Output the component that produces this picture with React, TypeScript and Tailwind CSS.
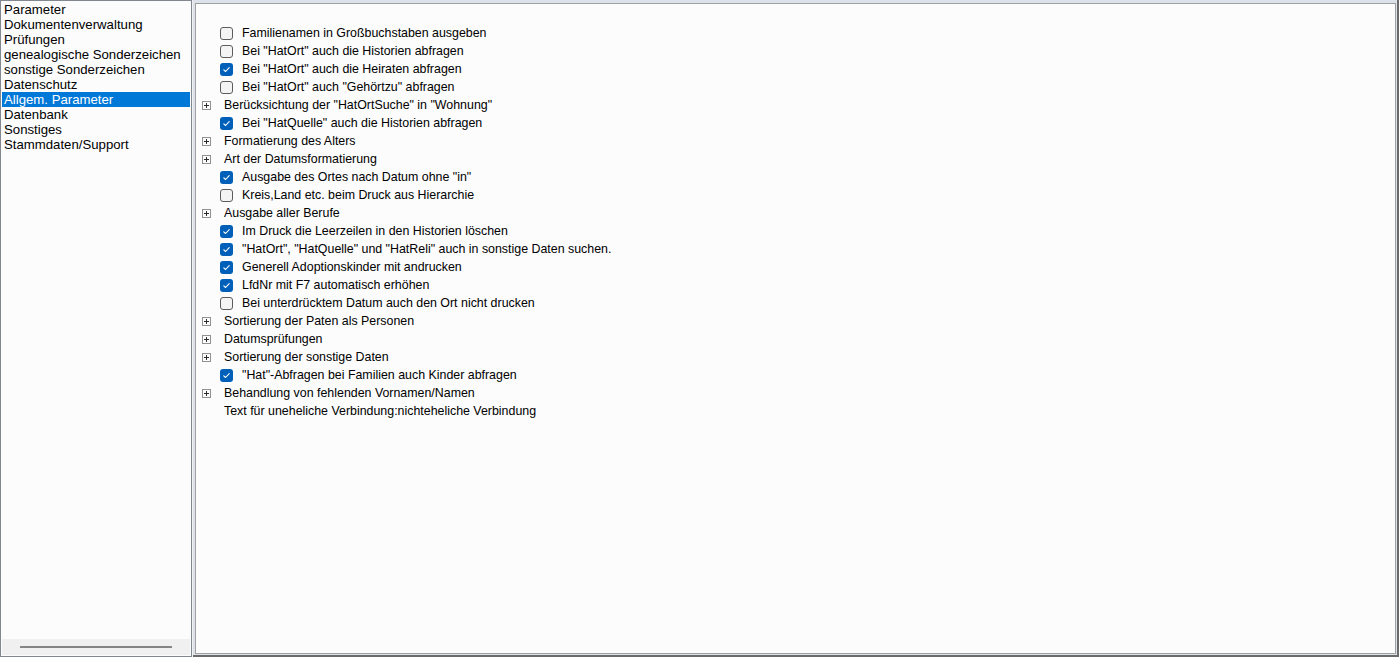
import React from "react";

type Row =
  | { kind: "check"; label: string; checked: boolean }
  | { kind: "node"; label: string }
  | { kind: "text"; label: string };

const navItems = [
  "Parameter",
  "Dokumentenverwaltung",
  "Prüfungen",
  "genealogische Sonderzeichen",
  "sonstige Sonderzeichen",
  "Datenschutz",
  "Allgem. Parameter",
  "Datenbank",
  "Sonstiges",
  "Stammdaten/Support",
];

const rows: Row[] = [
  { kind: "check", label: "Familienamen in Großbuchstaben ausgeben", checked: false },
  { kind: "check", label: 'Bei "HatOrt" auch die Historien abfragen', checked: false },
  { kind: "check", label: 'Bei "HatOrt" auch die Heiraten abfragen', checked: true },
  { kind: "check", label: 'Bei "HatOrt" auch "Gehörtzu" abfragen', checked: false },
  { kind: "node", label: 'Berücksichtung der "HatOrtSuche" in "Wohnung"' },
  { kind: "check", label: 'Bei "HatQuelle" auch die Historien abfragen', checked: true },
  { kind: "node", label: "Formatierung des Alters" },
  { kind: "node", label: "Art der Datumsformatierung" },
  { kind: "check", label: 'Ausgabe des Ortes nach Datum ohne "in"', checked: true },
  { kind: "check", label: "Kreis,Land etc. beim Druck aus Hierarchie", checked: false },
  { kind: "node", label: "Ausgabe aller Berufe" },
  { kind: "check", label: "Im Druck die Leerzeilen in den Historien löschen", checked: true },
  { kind: "check", label: '"HatOrt", "HatQuelle" und "HatReli" auch in sonstige Daten suchen.', checked: true },
  { kind: "check", label: "Generell Adoptionskinder mit andrucken", checked: true },
  { kind: "check", label: "LfdNr mit F7 automatisch erhöhen", checked: true },
  { kind: "check", label: "Bei unterdrücktem Datum auch den Ort nicht drucken", checked: false },
  { kind: "node", label: "Sortierung der Paten als Personen" },
  { kind: "node", label: "Datumsprüfungen" },
  { kind: "node", label: "Sortierung der sonstige Daten" },
  { kind: "check", label: '"Hat"-Abfragen bei Familien auch Kinder abfragen', checked: true },
  { kind: "node", label: "Behandlung von fehlenden Vornamen/Namen" },
  { kind: "text", label: "Text für uneheliche Verbindung:nichteheliche Verbindung" },
];

function CheckBox({ checked }: { checked: boolean }) {
  if (checked) {
    return (
      <span className="flex h-[13px] w-[13px] items-center justify-center rounded-[3px] bg-[#005fb8]">
        <svg width="9" height="9" viewBox="0 0 9 9" fill="none">
          <path d="M1.8 4.8 L3.6 6.5 L7.2 2.6" stroke="#fff" strokeWidth="1.1" strokeLinecap="round" strokeLinejoin="round" />
        </svg>
      </span>
    );
  }
  return <span className="block h-[13px] w-[13px] rounded-[3px] border border-[#5c5c5c] bg-[#f4f4f4]" />;
}

function PlusBox() {
  return (
    <span className="flex h-[9px] w-[9px] items-center justify-center border border-[#919191] bg-[#fcfcfc]">
      <svg width="7" height="7" viewBox="0 0 7 7">
        <path d="M1 3.5 H6 M3.5 1 V6" stroke="#2b2b2b" strokeWidth="1" />
      </svg>
    </span>
  );
}

export default function App() {
  return (
    <div
      className="flex h-[657px] w-[1399px] bg-[#f0f0f0] text-black"
      style={{ fontFamily: '"Liberation Sans", Arial, sans-serif' }}
    >
      {/* Left navigation */}
      <div className="flex h-full w-[192px] flex-col border border-[#828790] bg-[#fcfcfc]">
        <ul className="flex-1 pt-[1px] text-[13.2px] leading-[15px]">
          {navItems.map((item) => (
            <li
              key={item}
              className={`mx-[1px] h-[15px] px-[2px] ${
                item === "Allgem. Parameter" ? "bg-[#0078d7] text-white" : ""
              }`}
            >
              {item}
            </li>
          ))}
        </ul>
        <div className="mx-[1px] mb-[1px] flex h-[16px] items-center bg-[#f0f0f0] px-[18px]">
          <div className="h-[2px] w-[152px] bg-[#858585]" />
        </div>
      </div>

      {/* Right panel */}
      <div className="ml-[1px] flex h-full flex-1 flex-col border-b-2 border-r-2 border-[#6b6b6b] bg-[#dde1ea] pb-[1px] pl-[2px] pr-[1px] pt-[3px]">
        <div className="flex-1 border border-[#a0a0a0] bg-[#fcfcfc] pl-[6px] pt-[20px] text-[12.4px]">
          {rows.map((row) => (
            <div key={row.label} className="flex h-[18px] items-center">
              {row.kind === "check" ? (
                <>
                  <span className="ml-[18px] mr-[9px]">
                    <CheckBox checked={row.checked} />
                  </span>
                  <span>{row.label}</span>
                </>
              ) : row.kind === "node" ? (
                <>
                  <span className="mr-[13px]">
                    <PlusBox />
                  </span>
                  <span>{row.label}</span>
                </>
              ) : (
                <span className="ml-[22px]">{row.label}</span>
              )}
            </div>
          ))}
        </div>
      </div>
    </div>
  );
}
